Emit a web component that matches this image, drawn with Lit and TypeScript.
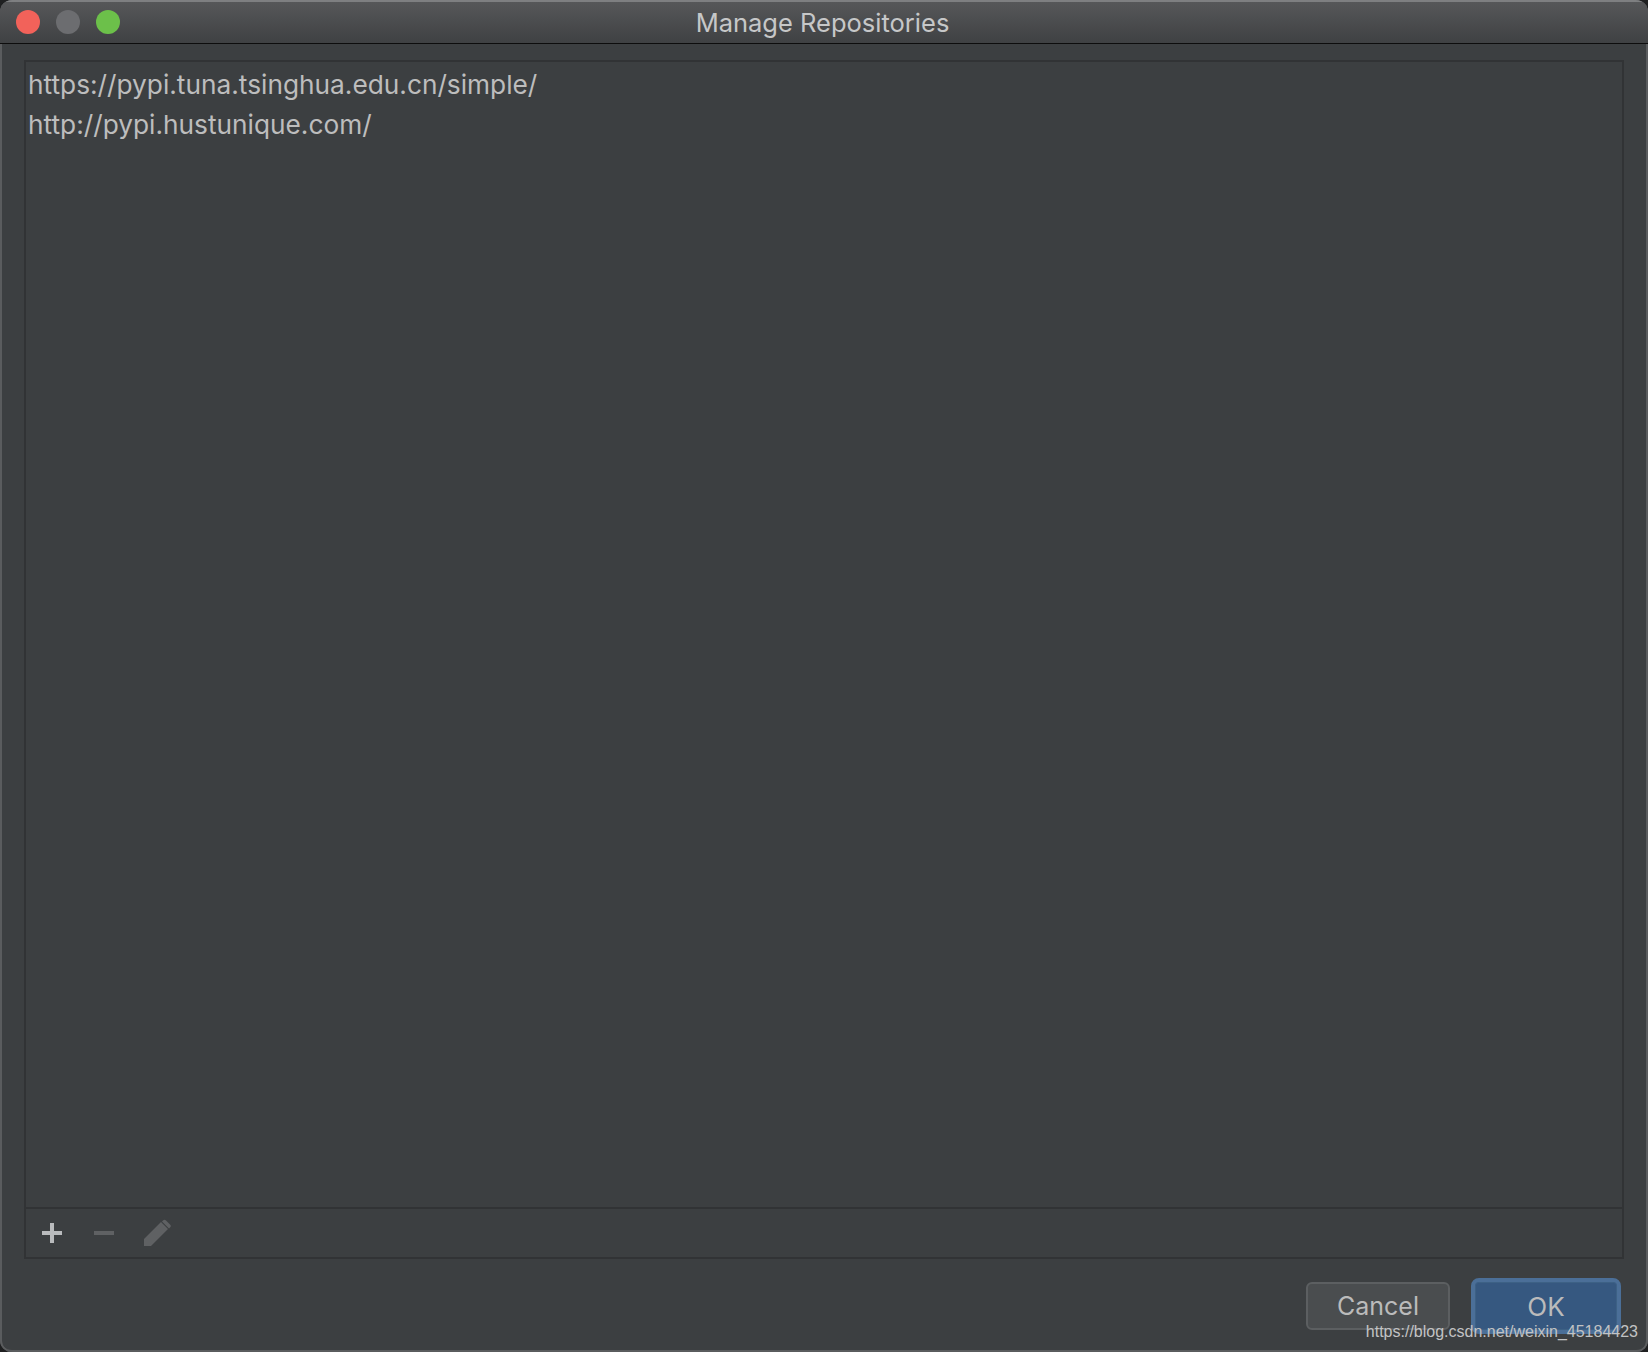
import { LitElement, html, css } from "lit";
import { customElement } from "lit/decorators.js";

@customElement("app-root")
export class AppRoot extends LitElement {
  static styles = css`
    :host { display: block; width: 1648px; height: 1352px; background: #1f2021; }
    * { box-sizing: border-box; }
    .window {
      position: relative; width: 1648px; height: 1352px; display: flex; flex-direction: column;
      background: #3c3f41; border-radius: 12px; overflow: hidden;
      box-shadow: inset 2px 0 0 #5a5c5e, inset -2px 0 0 #5a5c5e, inset 0 -2px 0 #5a5c5e;
      font-family: Inter, "Liberation Sans", sans-serif;
    }
    .titlebar {
      height: 44px; flex: none; display: flex; align-items: center; position: relative;
      padding-left: 16px; gap: 16px;
      background: linear-gradient(#565759, #3f4143);
      border-top: 2px solid #7e7f81; border-bottom: 1px solid #0d0d0d;
    }
    .light { width: 24px; height: 24px; border-radius: 50%; position: relative; top: -1px; }
    .red { background: #f2625a; }
    .grey { background: #6c6d70; }
    .green { background: #6cc04a; }
    .title {
      position: absolute; left: 0; right: 0; top: 6px; text-align: center;
      font-size: 25.5px; line-height: 30px; color: #c6c7c8; padding-right: 3px;
    }
    .content { flex: 1; display: flex; flex-direction: column; padding: 16px 24px 0; min-height: 0; }
    .panel { flex: 1; display: flex; flex-direction: column; border: 2px solid #313335; min-height: 0; }
    .list { flex: 1; padding: 3px 2px; font-size: 26.27px; line-height: 40px; color: #bdbdbd; }
    .toolbar {
      height: 50px; flex: none; display: flex; align-items: center; gap: 28px; padding: 0 14px;
      border-top: 2px solid #313335;
    }
    .toolbar svg { display: block; width: 24px; height: 30px; }
    .toolbar svg.pencil { width: 28px; margin-left: -1px; }
    .footer { height: 93px; flex: none; display: flex; justify-content: flex-end; align-items: center; gap: 21px; padding: 1px 3px 0 0; }
    .btn {
      display: flex; align-items: center; justify-content: center; color: #bbbbbb; border-radius: 6px;
    }
    .cancel { width: 144px; height: 48px; font-size: 25px; background: #4a4d4f; border: 2px solid #5c5f61; }
    .ok { width: 150px; height: 56px; font-size: 26px; background: #365880; border: 4px solid #4b6f98; border-radius: 8px; box-shadow: inset 0 0 0 1px #3d6185; }
    .mark {
      position: absolute; right: 10px; top: 1322px; font-family: "Liberation Sans", sans-serif;
      font-size: 16px; line-height: 20px; color: #c2c3c4;
    }
  `;

  render() {
    return html`
      <div class="window">
        <div class="titlebar">
          <div class="light red"></div>
          <div class="light grey"></div>
          <div class="light green"></div>
          <div class="title">Manage Repositories</div>
        </div>
        <div class="content">
          <div class="panel">
            <div class="list">
              <div>https://pypi.tuna.tsinghua.edu.cn/simple/</div>
              <div>http://pypi.hustunique.com/</div>
            </div>
            <div class="toolbar">
              <svg viewBox="0 0 24 30"><path d="M2 15h20M12 5v20" stroke="#b9bbbd" stroke-width="4" fill="none"/></svg>
              <svg viewBox="0 0 24 30"><path d="M2 15h20" stroke="#5f6163" stroke-width="4" fill="none"/></svg>
              <svg class="pencil" viewBox="0 0 28 30"><path d="M1 28v-7L18 4l7 7L8 28z M20 2.5a2 2 0 0 1 3 0l4 4a2 2 0 0 1 0 3l-1 1-7-7z" fill="#5f6163"/></svg>
            </div>
          </div>
          <div class="footer">
            <div class="btn cancel">Cancel</div>
            <div class="btn ok">OK</div>
          </div>
        </div>
        <div class="mark">https://blog.csdn.net/weixin_45184423</div>
      </div>
    `;
  }
}
